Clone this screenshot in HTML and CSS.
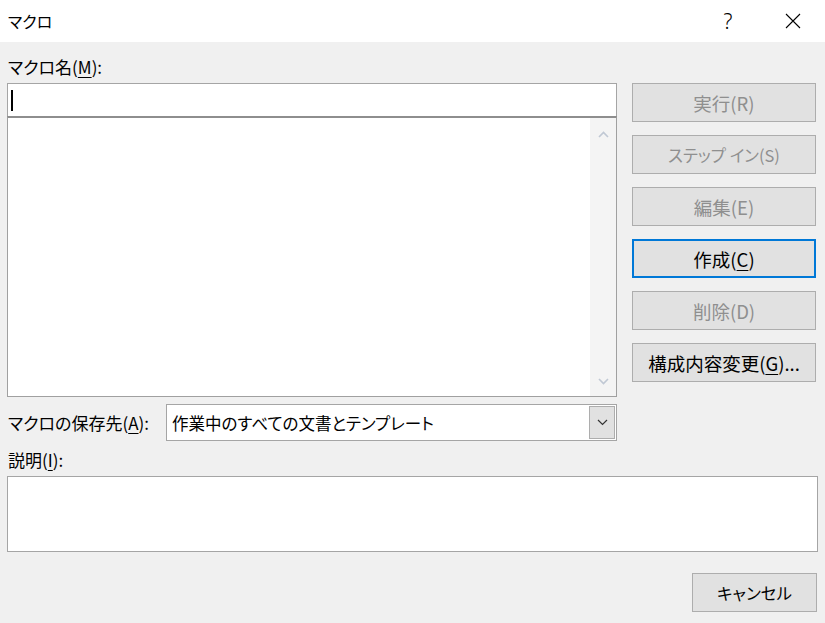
FILE: index.html
```html
<!DOCTYPE html>
<html lang="ja">
<head>
    <meta charset="UTF-8">
    <title>マクロ</title>
    <link rel="stylesheet" href="styles.css">
</head>
<body>
    <div class="titlebar">
        <div class="title">マクロ</div>
        <div class="help">?</div>
        <div class="close">
            <svg width="16" height="16" viewBox="0 0 16 16"><path d="M1 1 L15 15 M15 1 L1 15" stroke="#000" stroke-width="1.1" fill="none"/></svg>
        </div>
    </div>
    <div class="dialog">
        <div class="label name-label">マクロ名(<u>M</u>):</div>
        <div class="main">
            <div class="left">
                <div class="name-input"><span class="caret"></span></div>
                <div class="listbox">
                    <div class="scrollbar">
                        <svg class="arrow" width="11" height="7" viewBox="0 0 11 7"><path d="M1 6 L5.5 1.5 L10 6" stroke="#c0c8d4" stroke-width="1.6" fill="none"/></svg>
                        <svg class="arrow" width="11" height="7" viewBox="0 0 11 7"><path d="M1 1 L5.5 5.5 L10 1" stroke="#c0c8d4" stroke-width="1.6" fill="none"/></svg>
                    </div>
                </div>
                <div class="store-row">
                    <div class="label">マクロの保存先(<u>A</u>):</div>
                    <div class="select">
                        <span>作業中のすべての文書とテンプレート</span>
                        <div class="drop">
                            <svg width="11" height="7" viewBox="0 0 11 7"><path d="M1 1 L5.5 5.5 L10 1" stroke="#333" stroke-width="1.2" fill="none"/></svg>
                        </div>
                    </div>
                </div>
            </div>
            <div class="buttons">
                <button class="btn" disabled>実行(R)</button>
                <button class="btn kana" disabled>ステップ イン(S)</button>
                <button class="btn" disabled>編集(E)</button>
                <button class="btn default">作成(<u>C</u>)</button>
                <button class="btn" disabled>削除(D)</button>
                <button class="btn">構成内容変更(<u>G</u>)...</button>
            </div>
        </div>
        <div class="label desc-label">説明(<u>I</u>):</div>
        <div class="desc"></div>
        <div class="footer">
            <button class="btn kana cancel">キャンセル</button>
        </div>
    </div>
</body>
</html>
```

FILE: styles.css
```css
body { margin: 0; width: 825px; height: 623px; background: #f0f0f0; font-family: "Noto Sans CJK JP", "Noto Sans", sans-serif; font-size: 17px; color: #000; overflow: hidden; font-feature-settings: "palt"; }
u { text-decoration-thickness: 1px; text-underline-offset: 3px; }
.titlebar { height: 42px; background: #fff; display: flex; align-items: center; }
.title { flex: 1; padding-left: 8px; font-size: 16px; }
.help { width: 30px; text-align: center; font-family: "Noto Sans", sans-serif; font-weight: 300; font-size: 21px; margin-right: 42px; }
.close { width: 16px; height: 16px; margin-right: 24px; display: flex; }
.dialog { padding: 0 8px 0 7px; }
.label { line-height: 24px; padding-left: 1px; }
.name-label { padding-top: 13px; height: 28px; }
.main { display: flex; }
.left { width: 610px; }
.name-input { height: 32px; background: #fff; border: 1px solid #a5a5a5; border-bottom: none; display: flex; align-items: center; padding-left: 3px; }
.caret { width: 2px; height: 21px; background: #000; }
.listbox { height: 278px; background: #fff; border: 1px solid #a0a0a0; border-top: 2px solid #8e8e8e; display: flex; justify-content: flex-end; }
.scrollbar { width: 26px; background: #f4f4f4; display: flex; flex-direction: column; justify-content: space-between; align-items: center; padding: 13px 0 11px; box-sizing: border-box; }
.arrow { display: block; }
.store-row { display: flex; align-items: center; margin-top: 7px; height: 37px; }
.store-row .label { width: 158px; }
.select { flex: 1; height: 35px; background: #fff; border: 1px solid #a5a5a5; display: flex; align-items: center; justify-content: space-between; padding-left: 5px; font-size: 16.5px; }
.drop { width: 24px; height: 31px; margin-right: 1px; background: #e1e1e1; border: 1px solid #adadad; display: flex; align-items: center; justify-content: center; }
.buttons { margin-left: 15px; display: flex; flex-direction: column; gap: 13px; }
.btn { width: 184px; height: 39px; background: #e1e1e1; border: 1px solid #adadad; font-family: inherit; font-size: 18.5px; color: #000; padding: 0; font-feature-settings: "palt"; }
.btn.kana { font-size: 16.5px; }
.btn:disabled { color: #8f8f8f; }
.btn.default { border: 2px solid #0078d7; }
.desc-label { height: 24px; padding-top: 7px; padding-bottom: 4px; }
.desc { height: 74px; background: #fff; border: 1px solid #a5a5a5; margin-right: -1px; }
.footer { display: flex; justify-content: flex-end; margin-top: 21px; }
.cancel { width: 125px; }
```
